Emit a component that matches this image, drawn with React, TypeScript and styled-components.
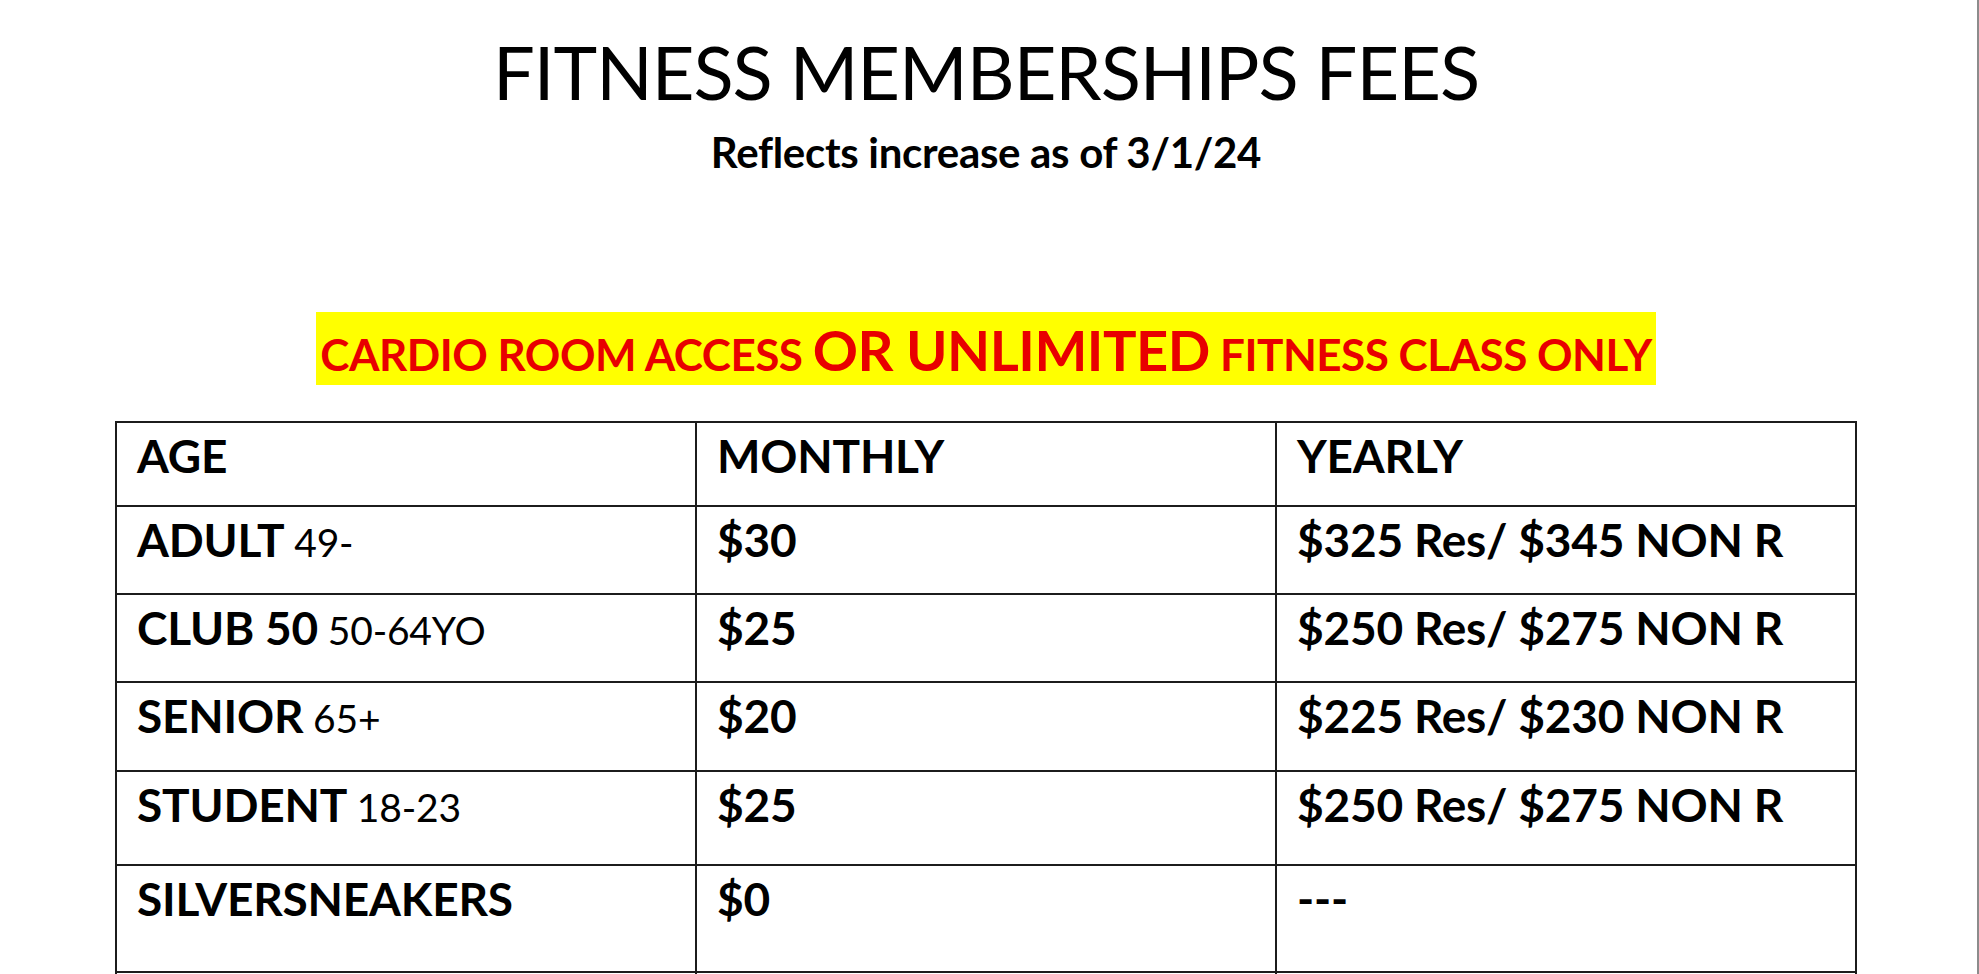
import { FC } from 'react'
import styled, { createGlobalStyle } from 'styled-components'

interface FeeRow {
  label: string
  ages?: string
  monthly: string
  yearly: string
  height: number
}

const rows: FeeRow[] = [
  { label: 'ADULT', ages: '49-', monthly: '$30', yearly: '$325 Res/ $345 NON R', height: 88 },
  { label: 'CLUB 50', ages: '50-64YO', monthly: '$25', yearly: '$250 Res/ $275 NON R', height: 88 },
  { label: 'SENIOR', ages: '65+', monthly: '$20', yearly: '$225 Res/ $230 NON R', height: 89 },
  { label: 'STUDENT', ages: '18-23', monthly: '$25', yearly: '$250 Res/ $275 NON R', height: 94 },
  { label: 'SILVERSNEAKERS', monthly: '$0', yearly: '---', height: 107 },
  { label: '', monthly: '', yearly: '', height: 90 }
]

const App: FC = () => {
  return (
    <>
      <GlobalStyle />
      <Page>
        <Header>
          <Title>FITNESS MEMBERSHIPS FEES</Title>
          <Subtitle>Reflects increase as of 3/1/24</Subtitle>
        </Header>
        <BannerRow>
          <Banner>
            CARDIO ROOM ACCESS <Emphasis>OR UNLIMITED</Emphasis> FITNESS CLASS ONLY
          </Banner>
        </BannerRow>
        <Table>
          <thead>
            <Row height={84}>
              <Cell as="th">AGE</Cell>
              <Cell as="th">MONTHLY</Cell>
              <Cell as="th">YEARLY</Cell>
            </Row>
          </thead>
          <tbody>
            {rows.map((row, index) => (
              <Row key={`${row.label}${index}`} height={row.height}>
                <Cell>
                  {row.label}
                  {row.ages && <Ages> {row.ages}</Ages>}
                </Cell>
                <Cell>{row.monthly}</Cell>
                <Cell>{row.yearly}</Cell>
              </Row>
            ))}
          </tbody>
        </Table>
      </Page>
    </>
  )
}

export default App

const GlobalStyle = createGlobalStyle`
  html, body {
    margin: 0;
    padding: 0;
    background: #ffffff;
  }
  body {
    font-family: Lato, "Open Sans", sans-serif;
    color: #000000;
  }
`

const Page = styled.div`
  box-sizing: border-box;
  width: 1979px;
  height: 974px;
  overflow: hidden;
  padding: 0 0 0 115px;
  border-right: 2px solid #8c8c8c;
  background: #ffffff;
`

const Header = styled.header`
  width: 1742px;
  display: flex;
  flex-direction: column;
  align-items: center;
  padding-top: 30px;
`

const Title = styled.h1`
  margin: 0;
  font-weight: 400;
  font-size: 74px;
  line-height: 84px;
  letter-spacing: -1px;
`

const Subtitle = styled.p`
  margin: 14px 0 0;
  font-weight: 700;
  font-size: 42px;
  line-height: 48px;
  letter-spacing: -0.3px;
`

const BannerRow = styled.div`
  width: 1742px;
  display: flex;
  justify-content: center;
  margin-top: 136px;
`

const Banner = styled.div`
  height: 73px;
  box-sizing: border-box;
  padding: 6px 4px 0;
  background: #ffff00;
  color: #e80000;
  font-weight: 700;
  font-size: 44px;
  line-height: 64px;
  letter-spacing: -0.5px;
  white-space: nowrap;
`

const Emphasis = styled.span`
  font-size: 56px;
`

const Table = styled.table`
  margin-top: 36px;
  width: 1742px;
  border-collapse: collapse;
  table-layout: fixed;
`

const Row = styled.tr<{ height: number }>`
  height: ${(p) => p.height}px;
`

const Cell = styled.td`
  box-sizing: border-box;
  border: 2px solid #1c1c1c;
  padding: 5px 20px 0;
  vertical-align: top;
  text-align: left;
  font-weight: 700;
  font-size: 46px;
  line-height: 56px;
  letter-spacing: -0.2px;
  white-space: nowrap;
`

const Ages = styled.span`
  font-weight: 400;
  font-size: 39px;
`
